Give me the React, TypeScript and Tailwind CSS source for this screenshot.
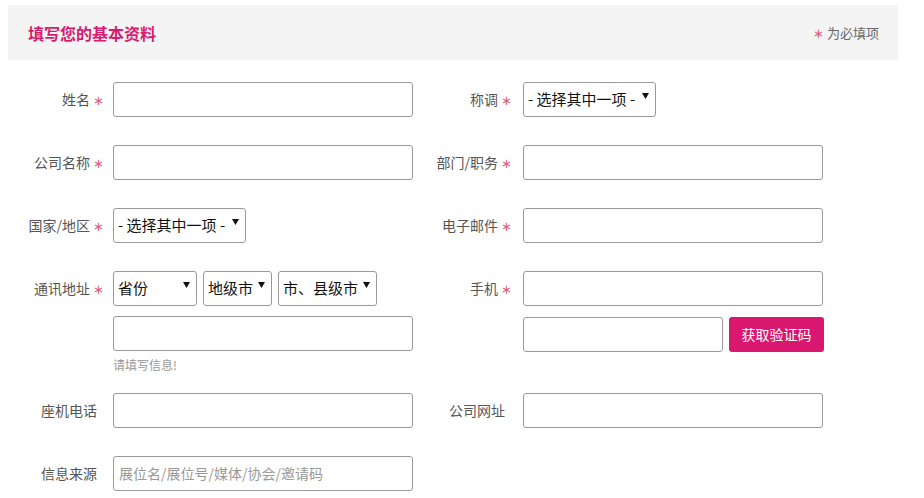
import React from "react";

const FONT = "font-['Microsoft_YaHei','Noto_Sans_CJK_SC',sans-serif]";

function Star() {
  return <span className="ml-[3px] text-[13px] text-[#e0607a]">∗</span>;
}

function Label({ text, required, width }: { text: string; required?: boolean; width: string }) {
  return (
    <div className={`${width} shrink-0 text-right text-[14px] text-[#555] ${required ? "pr-[1px]" : "pr-2"}`}>
      {text}
      {required && <Star />}
    </div>
  );
}

function TextBox({ w = "w-[300px]", placeholder }: { w?: string; placeholder?: string }) {
  return (
    <div className={`${w} h-[35px] shrink-0 rounded-[3px] border border-[#9a9a9a] bg-white px-[5px] flex items-center text-[14px] text-[#999]`}>
      {placeholder}
    </div>
  );
}

function Select({ w, text }: { w: string; text: string }) {
  return (
    <div className={`${w} h-[35px] shrink-0 rounded-[3px] border border-[#9a9a9a] bg-white pl-[4px] pr-[6px] flex items-center justify-between text-[15px] text-[#111]`}>
      <span className="whitespace-nowrap">{text}</span>
      <svg width="7" height="6" viewBox="0 0 7 6" className="mb-[7px] ml-1 shrink-0">
        <path d="M0 0h7L3.5 6z" fill="#111" />
      </svg>
    </div>
  );
}

function LeftLabel(props: { text: string; required?: boolean }) {
  return <Label {...props} width="w-[105px]" />;
}

function RightLabel(props: { text: string; required?: boolean }) {
  return <Label {...props} width="w-[100px]" />;
}

export default function App() {
  return (
    <div className={`w-[924px] h-[498px] bg-white overflow-hidden ${FONT}`}>
      <div className="mt-[5px] ml-[8px] w-[890px] h-[55px] bg-[#f4f4f5] flex items-center justify-between pl-[20px] pr-[19px]">
        <h1 className="text-[16px] font-bold text-[#d81b6e]">填写您的基本资料</h1>
        <span className="text-[13px] text-[#666]">
          <span className="text-[#e0607a] text-[13px] mr-[3px]">∗</span>为必填项
        </span>
      </div>

      <div className="mt-[22px] flex flex-col">
        {/* 姓名 / 称调 */}
        <div className="flex items-center">
          <LeftLabel text="姓名" required />
          <div className="ml-[8px]"><TextBox /></div>
          <RightLabel text="称调" required />
          <div className="ml-[10px]"><Select w="w-[133px]" text="- 选择其中一项 -" /></div>
        </div>

        {/* 公司名称 / 部门 */}
        <div className="mt-[28px] flex items-center">
          <LeftLabel text="公司名称" required />
          <div className="ml-[8px]"><TextBox /></div>
          <RightLabel text="部门/职务" required />
          <div className="ml-[10px]"><TextBox /></div>
        </div>

        {/* 国家 / 邮件 */}
        <div className="mt-[28px] flex items-center">
          <LeftLabel text="国家/地区" required />
          <div className="ml-[8px] w-[300px]"><Select w="w-[133px]" text="- 选择其中一项 -" /></div>
          <RightLabel text="电子邮件" required />
          <div className="ml-[10px]"><TextBox /></div>
        </div>

        {/* 通讯地址 / 手机 */}
        <div className="mt-[28px] flex items-start">
          <div className="flex flex-col">
            <div className="flex items-center">
              <LeftLabel text="通讯地址" required />
              <div className="ml-[8px] w-[300px] flex gap-[6px]">
                <Select w="w-[84px]" text="省份" />
                <Select w="w-[69px]" text="地级市" />
                <Select w="w-[99px]" text="市、县级市" />
              </div>
            </div>
            <div className="mt-[10px] ml-[113px]"><TextBox /></div>
            <div className="mt-[5px] ml-[113px] text-[12px] text-[#999]">请填写信息!</div>
          </div>
          <div className="flex flex-col">
            <div className="flex items-center">
              <RightLabel text="手机" required />
              <div className="ml-[10px]"><TextBox /></div>
            </div>
            <div className="mt-[11px] ml-[110px] flex items-center gap-[6px]">
              <TextBox w="w-[200px]" />
              <button className="w-[95px] h-[35px] rounded-[3px] bg-[#d9176e] text-white text-[14px]">
                获取验证码
              </button>
            </div>
          </div>
        </div>

        {/* 座机 / 网址 */}
        <div className="mt-[19px] flex items-center">
          <LeftLabel text="座机电话" />
          <div className="ml-[8px]"><TextBox /></div>
          <RightLabel text="公司网址" />
          <div className="ml-[10px]"><TextBox /></div>
        </div>

        {/* 信息来源 */}
        <div className="mt-[28px] flex items-center">
          <LeftLabel text="信息来源" />
          <div className="ml-[8px]"><TextBox placeholder="展位名/展位号/媒体/协会/邀请码" /></div>
        </div>
      </div>
    </div>
  );
}
